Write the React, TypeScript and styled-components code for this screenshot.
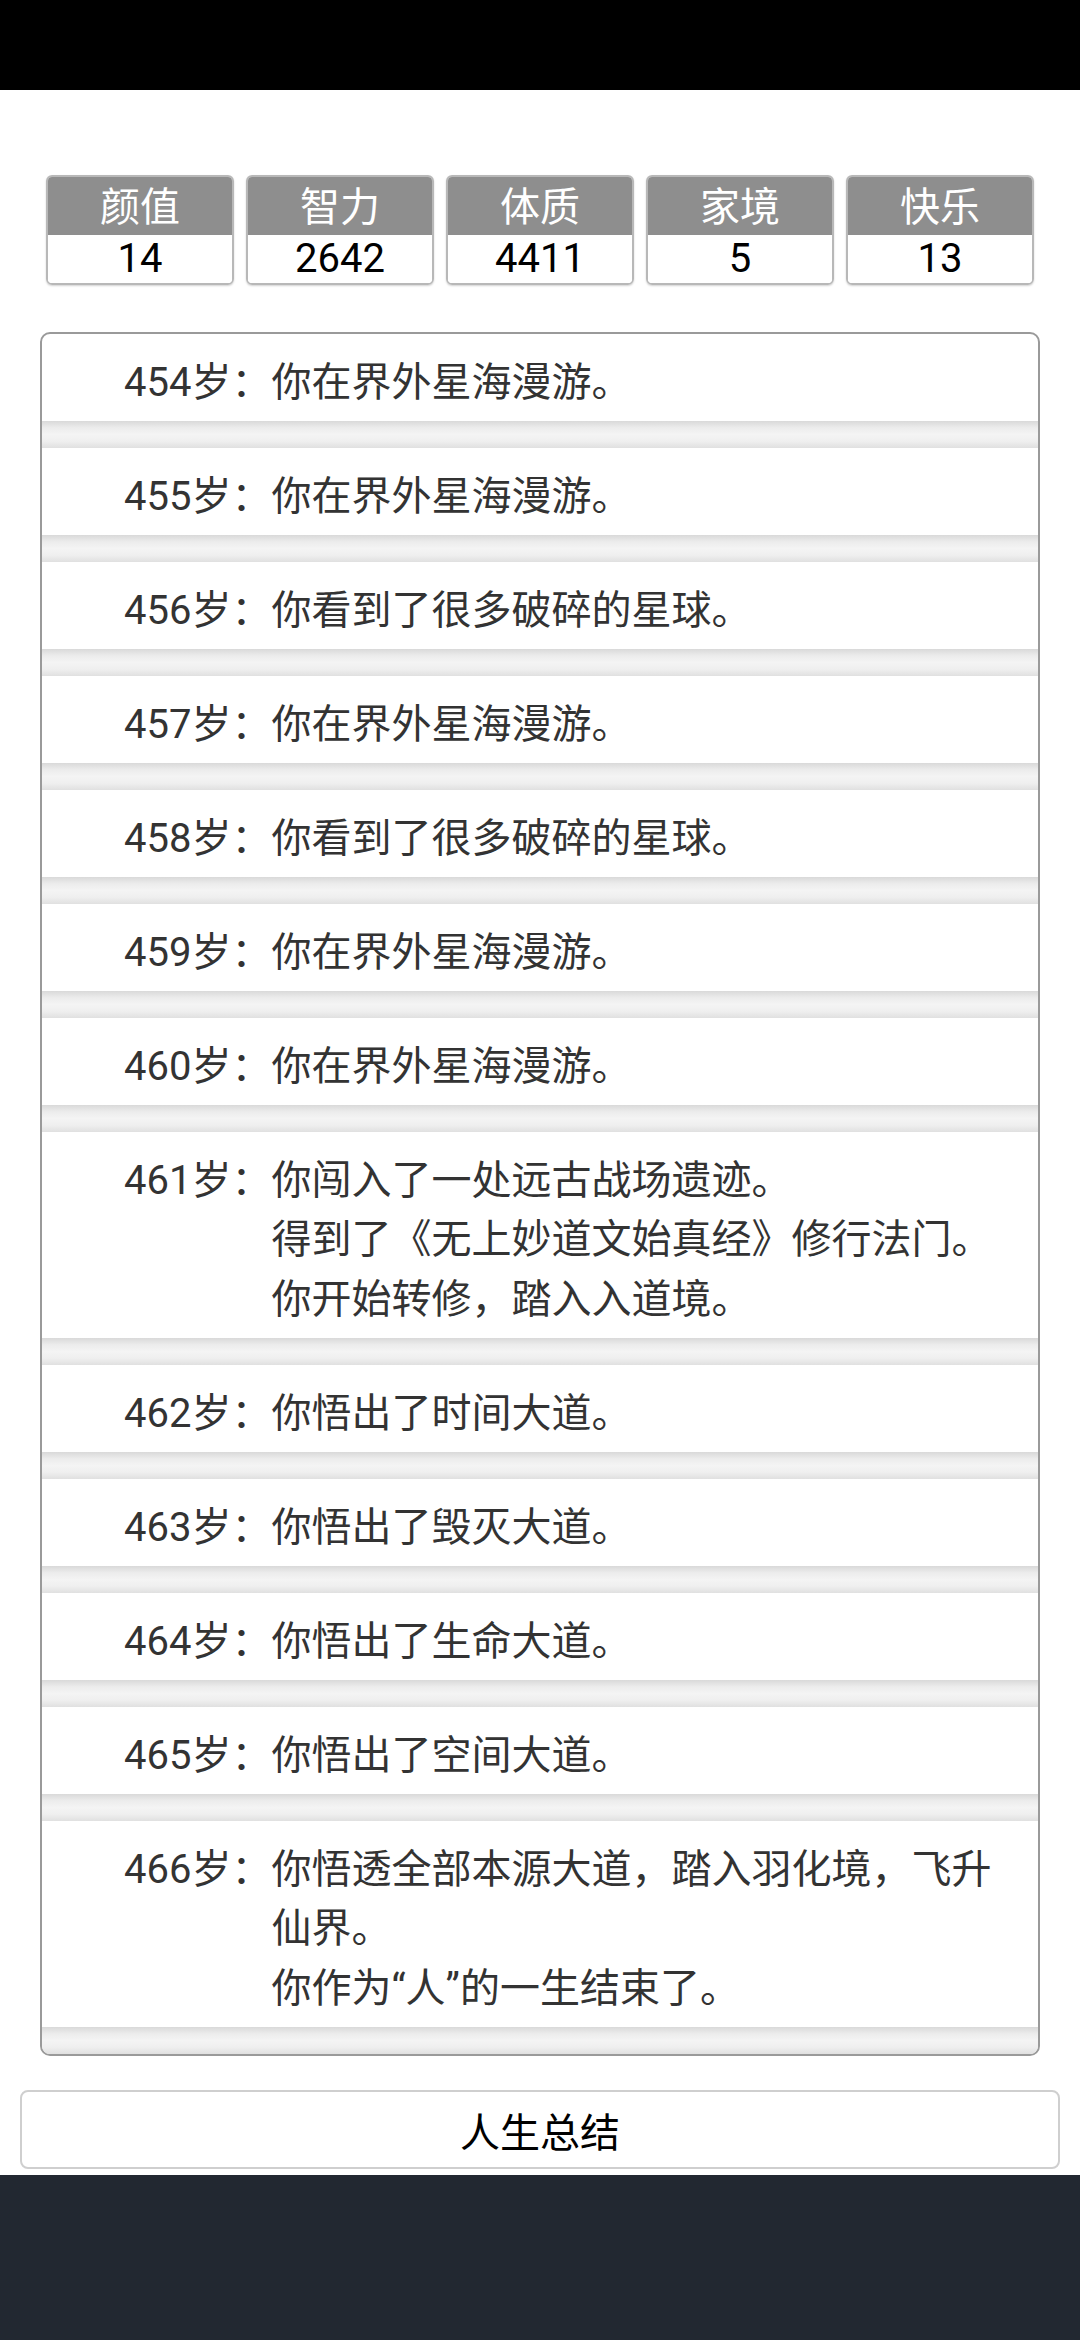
import React from "react";
import styled, { createGlobalStyle } from "styled-components";

const GlobalStyle = createGlobalStyle`
  * {
    box-sizing: border-box;
  }
  body {
    margin: 0;
    background: #ffffff;
    font-family: Roboto, "Noto Sans CJK SC", sans-serif;
  }
`;

const stats = [
  { name: "颜值", value: "14" },
  { name: "智力", value: "2642" },
  { name: "体质", value: "4411" },
  { name: "家境", value: "5" },
  { name: "快乐", value: "13" },
];

const logs: { age: number; lines: string[] }[] = [
  { age: 454, lines: ["你在界外星海漫游。"] },
  { age: 455, lines: ["你在界外星海漫游。"] },
  { age: 456, lines: ["你看到了很多破碎的星球。"] },
  { age: 457, lines: ["你在界外星海漫游。"] },
  { age: 458, lines: ["你看到了很多破碎的星球。"] },
  { age: 459, lines: ["你在界外星海漫游。"] },
  { age: 460, lines: ["你在界外星海漫游。"] },
  {
    age: 461,
    lines: [
      "你闯入了一处远古战场遗迹。",
      "得到了《无上妙道文始真经》修行法门。",
      "你开始转修，踏入入道境。",
    ],
  },
  { age: 462, lines: ["你悟出了时间大道。"] },
  { age: 463, lines: ["你悟出了毁灭大道。"] },
  { age: 464, lines: ["你悟出了生命大道。"] },
  { age: 465, lines: ["你悟出了空间大道。"] },
  {
    age: 466,
    lines: ["你悟透全部本源大道，踏入羽化境，飞升仙界。", "你作为“人”的一生结束了。"],
  },
];

const App = () => {
  return (
    <Page>
      <GlobalStyle />
      <StatusBar />
      <StatsRow>
        {stats.map((s) => (
          <StatBox key={s.name}>
            <StatName>{s.name}</StatName>
            <StatValue>{s.value}</StatValue>
          </StatBox>
        ))}
      </StatsRow>
      <LogPanel>
        {logs.map((log) => (
          <LogItem key={log.age}>
            <LogRow>
              <AgeLabel>{log.age}岁：</AgeLabel>
              <LogText>
                {log.lines.map((line, i) => (
                  <Line key={i}>{line}</Line>
                ))}
              </LogText>
            </LogRow>
            <Divider />
          </LogItem>
        ))}
      </LogPanel>
      <SummaryButton>人生总结</SummaryButton>
      <BottomBar />
    </Page>
  );
};

export default App;

const Page = styled.div`
  width: 1080px;
  min-height: 2340px;
  display: flex;
  flex-direction: column;
  background: #ffffff;
`;

const StatusBar = styled.div`
  height: 90px;
  background: #000000;
`;

const StatsRow = styled.div`
  display: flex;
  gap: 12px;
  padding: 0 46px;
  margin-top: 85px;
`;

const StatBox = styled.div`
  flex: 1;
  display: flex;
  flex-direction: column;
  border: 2px solid #b8b8b8;
  border-radius: 6px;
  overflow: hidden;
  box-shadow: 0 1px 2px rgba(0, 0, 0, 0.18);
`;

const StatName = styled.div`
  height: 58px;
  line-height: 61px;
  background: #8e8e8e;
  color: #ffffff;
  font-size: 40px;
  text-align: center;
`;

const StatValue = styled.div`
  height: 48px;
  line-height: 48px;
  background: #ffffff;
  color: #000000;
  font-size: 40px;
  text-align: center;
`;

const LogPanel = styled.div`
  margin: 47px 40px 0;
  border: 2px solid #9a9a9a;
  border-radius: 10px;
  overflow: hidden;
  background: #ffffff;
`;

const LogItem = styled.div`
  display: flex;
  flex-direction: column;
`;

const LogRow = styled.div`
  display: flex;
  align-items: flex-start;
  padding: 18.5px 30px 9px 82px;
  font-size: 40px;
  line-height: 59.5px;
  color: #333333;
`;

const AgeLabel = styled.span`
  white-space: nowrap;
`;

const LogText = styled.div`
  flex: 1;
  display: flex;
  flex-direction: column;
`;

const Line = styled.span`
  display: block;
`;

const Divider = styled.div`
  height: 27px;
  background: linear-gradient(
    to bottom,
    #d9d9d9 0%,
    #ececec 25%,
    #f4f4f4 50%,
    #efefef 75%,
    #e0e0e0 100%
  );
`;

const SummaryButton = styled.div`
  margin: 34px 20px 0;
  height: 79px;
  border: 2px solid #cfcfcf;
  border-radius: 8px;
  display: flex;
  align-items: center;
  justify-content: center;
  font-size: 40px;
  color: #000000;
  background: #ffffff;
`;

const BottomBar = styled.div`
  flex: 1;
  margin-top: 6px;
  background: #222831;
`;
